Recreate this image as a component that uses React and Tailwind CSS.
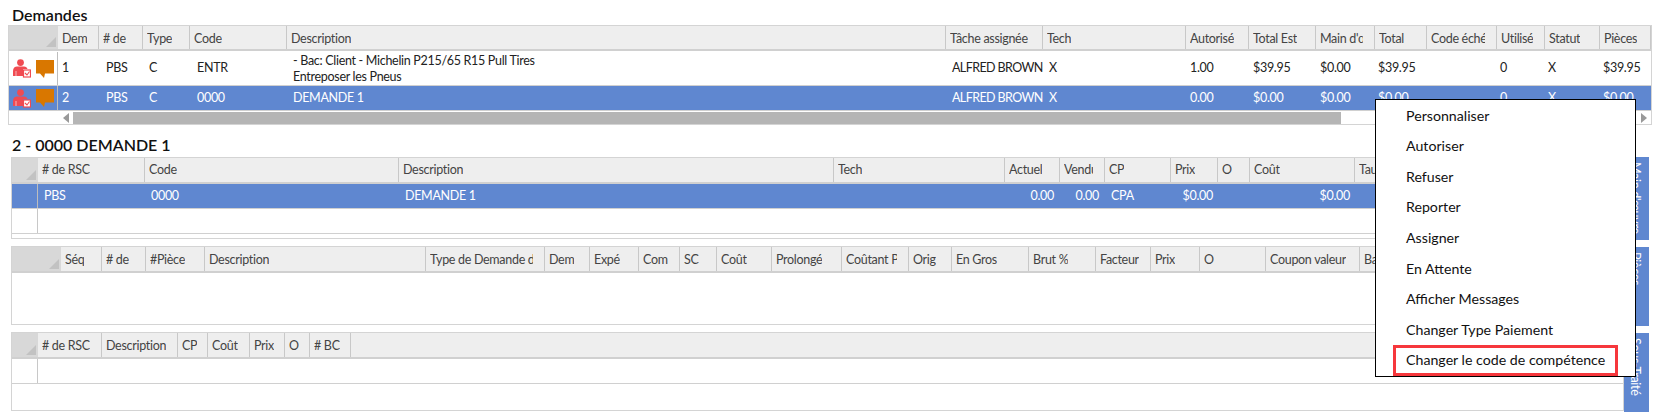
const demandColumns = [
  { label: 'Dem', w: 'w-[41px]' },
  { label: '# de', w: 'w-[44px]' },
  { label: 'Type', w: 'w-[47px]' },
  { label: 'Code', w: 'w-[97px]' },
  { label: 'Description', w: 'w-[659px]' },
  { label: 'Tâche assignée', w: 'w-[97px]' },
  { label: 'Tech', w: 'w-[143px]' },
  { label: 'Autorisé', w: 'w-[63px]' },
  { label: 'Total Est', w: 'w-[67px]' },
  { label: "Main d'œuvre", w: 'w-[59px]' },
  { label: 'Total', w: 'w-[52px]' },
  { label: 'Code échéance', w: 'w-[70px]' },
  { label: 'Utilisé', w: 'w-[48px]' },
  { label: 'Statut', w: 'w-[55px]' },
  { label: 'Pièces', w: 'w-[51px]' },
];

const laborColumns = [
  { label: '# de RSC', w: 'w-[107px]' },
  { label: 'Code', w: 'w-[254px]' },
  { label: 'Description', w: 'w-[435px]' },
  { label: 'Tech', w: 'w-[171px]' },
  { label: 'Actuel', w: 'w-[55px]' },
  { label: 'Vendu', w: 'w-[45px]' },
  { label: 'CP', w: 'w-[66px]' },
  { label: 'Prix', w: 'w-[47px]' },
  { label: 'O', w: 'w-[32px]' },
  { label: 'Coût', w: 'w-[105px]' },
  { label: 'Taux', w: 'w-[105px]' },
];

const partColumns = [
  { label: 'Séq', w: 'w-[41px]' },
  { label: '# de', w: 'w-[44px]' },
  { label: '#Pièce', w: 'w-[59px]' },
  { label: 'Description', w: 'w-[221px]' },
  { label: 'Type de Demande de', w: 'w-[119px]' },
  { label: 'Dem', w: 'w-[45px]' },
  { label: 'Expé', w: 'w-[49px]' },
  { label: 'Com', w: 'w-[41px]' },
  { label: 'SC', w: 'w-[37px]' },
  { label: 'Coût', w: 'w-[55px]' },
  { label: 'Prolongé', w: 'w-[70px]' },
  { label: 'Coûtant Prolongé', w: 'w-[67px]' },
  { label: 'Orig', w: 'w-[43px]' },
  { label: 'En Gros', w: 'w-[77px]' },
  { label: 'Brut %', w: 'w-[67px]' },
  { label: 'Facteur', w: 'w-[55px]' },
  { label: 'Prix', w: 'w-[49px]' },
  { label: 'O', w: 'w-[66px]' },
  { label: 'Coupon valeur', w: 'w-[94px]' },
  { label: 'Base', w: 'w-[90px]' },
];

// ces colonnes sont étroites, le libellé n'est pas coupé
const subletColumns = [
  { label: '# de RSC', w: 'w-[64px]' },
  { label: 'Description', w: 'w-[76px]' },
  { label: 'CP', w: 'w-[30px]', tight: true },
  { label: 'Coût', w: 'w-[42px]', tight: true },
  { label: 'Prix', w: 'w-[35px]', tight: true },
  { label: 'O', w: 'w-[25px]', tight: true },
  { label: '# BC', w: 'w-[41px]', tight: true },
];

const menuItems = [
  'Personnaliser',
  'Autoriser',
  'Refuser',
  'Reporter',
  'Assigner',
  'En Attente',
  'Afficher Messages',
  'Changer Type Paiement',
  'Changer le code de compétence',
];

function CornerMark() {
  return (
    <svg className="absolute right-[2px] bottom-[2px]" width="10" height="10" viewBox="0 0 10 10">
      <path d="M10 0V10H0Z" fill="#c2c2c2" />
    </svg>
  );
}

function GridHeader({ columns, cornerWidth, height, textOffset }) {
  return (
    <div className={`flex border-b-2 border-[#d0d0d0] bg-[#eeeeee] ${height}`}>
      <div className={`relative shrink-0 bg-[#d8d8d8] ${cornerWidth}`}>
        <CornerMark />
      </div>
      {columns.map((col) => (
        <div
          key={col.label}
          className={`flex shrink-0 items-center border-r border-[#c8c8c8] pl-[4px] text-[#444444] ${textOffset} ${
            col.tight ? 'pr-[1px]' : 'pr-[11px]'
          } ${col.w}`}
        >
          <div className="overflow-hidden whitespace-nowrap">{col.label}</div>
        </div>
      ))}
    </div>
  );
}

function PersonIcon() {
  return (
    <svg width="18" height="19" viewBox="0 0 18 19">
      <circle cx="7.5" cy="3.6" r="3.4" fill="#f04b52" />
      <path d="M0 17V12C0 9 2 7.6 4 7.6H11C13 7.6 14 8.6 14.5 10H10V17Z" fill="#f04b52" />
      <path d="M3 12V17M11 12V17" stroke="#ffffff" strokeWidth="0.6" />
      <rect x="10.5" y="11" width="7" height="7" fill="#ffffff" stroke="#f04b52" strokeWidth="1.2" />
      <path d="M12 14L14 16L16.5 12.5" fill="none" stroke="#f04b52" strokeWidth="1.1" />
    </svg>
  );
}

function BubbleIcon() {
  return (
    <svg width="18" height="18" viewBox="0 0 18 18">
      <path d="M0 0H18V13.5H9L8 18L4 13.5H0Z" fill="#d97700" />
    </svg>
  );
}

function RowIcons({ selected }) {
  return (
    <div
      className={`flex w-[49px] shrink-0 items-center gap-[5px] self-stretch border-r border-[#bdbdbd] pl-[4px] ${
        selected ? 'bg-[#5f87d0]' : ''
      }`}
    >
      <PersonIcon />
      <BubbleIcon />
    </div>
  );
}

function Cell({ w, className, children }) {
  return <div className={`flex shrink-0 items-center whitespace-nowrap ${w} ${className}`}>{children}</div>;
}

function DemandRow({ selected, h, values }) {
  return (
    <div
      className={`flex border-b border-[#d0d0d0] ${h} ${selected ? 'bg-[#5f87d0] text-white' : 'text-[#222222]'}`}
    >
      <RowIcons selected={selected} />
      <Cell w="w-[41px]" className="pl-[4px]">{values.dem}</Cell>
      <Cell w="w-[44px]" className="pl-[7px]">PBS</Cell>
      <Cell w="w-[47px]" className="pl-[6px]">C</Cell>
      <Cell w="w-[97px]" className="pl-[7px]">{values.code}</Cell>
      <Cell w="w-[659px]" className="pl-[6px]">
        <div className="leading-[16px]">{values.description}</div>
      </Cell>
      <Cell w="w-[97px]" className="pl-[6px] tracking-[-0.6px]">ALFRED BROWN</Cell>
      <Cell w="w-[143px]" className="pl-[6px]">X</Cell>
      <Cell w="w-[63px]" className="pl-[4px]">{values.authorized}</Cell>
      <Cell w="w-[67px]" className="pl-[4px]">{values.estimate}</Cell>
      <Cell w="w-[59px]" className="pl-[4px]">$0.00</Cell>
      <Cell w="w-[52px]" className="pl-[3px]">{values.estimate}</Cell>
      <Cell w="w-[70px]" className="" />
      <Cell w="w-[48px]" className="pl-[3px]">0</Cell>
      <Cell w="w-[55px]" className="pl-[3px]">X</Cell>
      <Cell w="w-[51px]" className="pl-[3px]">{values.estimate}</Cell>
    </div>
  );
}

function ScrollBar() {
  return (
    <div className="flex h-[14px] items-center">
      <div className="ml-[54px] h-0 w-0 border-y-[5px] border-r-[6px] border-y-transparent border-r-[#999999]" />
      <div className="ml-[4px] h-[13px] w-[1268px] bg-[#b5b5b5]" />
      <div className="ml-auto mr-[4px] h-0 w-0 border-y-[5px] border-l-[6px] border-y-transparent border-l-[#999999]" />
    </div>
  );
}

function EmptyRows({ cornerWidth }) {
  return (
    <div className="flex h-[25px] border-b border-[#d0d0d0]">
      <div className={`shrink-0 border-r border-[#c8c8c8] ${cornerWidth}`} />
    </div>
  );
}

function SideTab({ label, className }) {
  return (
    <div
      className={`flex w-[25px] items-center justify-start bg-[#5f87d0] pr-[3px] pt-[5px] text-white [writing-mode:vertical-rl] ${className}`}
    >
      {label}
    </div>
  );
}

export default function App() {
  return (
    <div className="relative h-[417px] w-[1660px] overflow-hidden bg-white text-[12.5px] tracking-[-0.3px] [font-family:Lato,'Noto_Sans',sans-serif]">
      {/* Demandes */}
      <div className="pl-[8px] pr-[8px]">
        <div className="flex h-[25px] items-center pl-[4px] pt-[4px] text-[16px] font-semibold tracking-normal text-[#111111]">Demandes</div>
        <div className="h-[100px] overflow-hidden border border-[#d4d4d4]">
          <GridHeader columns={demandColumns} cornerWidth="w-[49px]" height="h-[25px]" textOffset="pt-[4px]" />
          <DemandRow
            h="h-[35px] pt-[1px]"
            values={{
              dem: '1',
              code: 'ENTR',
              description: (
                <>
                  - Bac: Client - Michelin P215/65 R15 Pull Tires
                  <br />
                  Entreposer les Pneus
                </>
              ),
              authorized: '1.00',
              estimate: '$39.95',
            }}
          />
          <DemandRow
            selected
            h="h-[25px]"
            values={{ dem: '2', code: '0000', description: 'DEMANDE 1', authorized: '0.00', estimate: '$0.00' }}
          />
          <ScrollBar />
        </div>
      </div>

      {/* Détail de la demande */}
      <div className="mt-[15px] pl-[11px] pr-[11px]">
        <div className="flex h-[17px] items-center pb-[8px] pl-[1px] text-[16px] font-semibold tracking-normal text-[#111111]">2 - 0000 DEMANDE 1</div>
        <div className="flex">
          <div className="flex w-[1613px] shrink-0 flex-col gap-[7px]">
            <div className="h-[82px] overflow-hidden border border-[#d4d4d4]">
              <GridHeader columns={laborColumns} cornerWidth="w-[26px]" height="h-[26px]" textOffset="pt-[1px]" />
              <div className="flex h-[25px] border-b border-[#d0d0d0] bg-[#5f87d0] text-white">
                <div className="w-[26px] shrink-0 border-r border-[#bdbdbd]" />
                <Cell w="w-[107px]" className="pl-[6px]">PBS</Cell>
                <Cell w="w-[254px]" className="pl-[6px]">0000</Cell>
                <Cell w="w-[435px]" className="pl-[6px]">DEMANDE 1</Cell>
                <Cell w="w-[171px]" className="" />
                <Cell w="w-[55px]" className="justify-end pr-[6px]">0.00</Cell>
                <Cell w="w-[45px]" className="justify-end pr-[6px]">0.00</Cell>
                <Cell w="w-[66px]" className="pl-[6px]">CPA</Cell>
                <Cell w="w-[47px]" className="justify-end pr-[5px]">$0.00</Cell>
                <Cell w="w-[32px]" className="" />
                <Cell w="w-[105px]" className="justify-end pr-[5px]">$0.00</Cell>
              </div>
              <EmptyRows cornerWidth="w-[26px]" />
            </div>
            <div className="h-[79px] overflow-hidden border border-[#d4d4d4]">
              <GridHeader columns={partColumns} cornerWidth="w-[49px]" height="h-[26px]" textOffset="pt-[3px]" />
            </div>
            <div className="h-[79px] overflow-hidden border border-[#d4d4d4]">
              <GridHeader columns={subletColumns} cornerWidth="w-[26px]" height="h-[26px]" textOffset="pt-[3px]" />
              <EmptyRows cornerWidth="w-[26px]" />
            </div>
          </div>
          <div className="flex flex-col gap-[7px]">
            <SideTab label="Main d'œuvre" className="h-[83px]" />
            <SideTab label="Pièces" className="h-[79px]" />
            <SideTab label="Sous-Traité" className="h-[79px]" />
          </div>
        </div>
      </div>

      {/* Menu contextuel */}
      <div className="absolute left-[1375px] top-[99px] h-[278px] w-[261px] border border-black bg-white text-[14.2px] tracking-normal text-[#111111]">
        {menuItems.map((item) => (
          <div key={item} className="flex h-[30.6px] items-center pl-[30px]">
            {item}
          </div>
        ))}
        <div className="absolute left-[17px] top-[245px] h-[31px] w-[225px] border-[3px] border-[#f6373c]" />
      </div>
    </div>
  );
}
